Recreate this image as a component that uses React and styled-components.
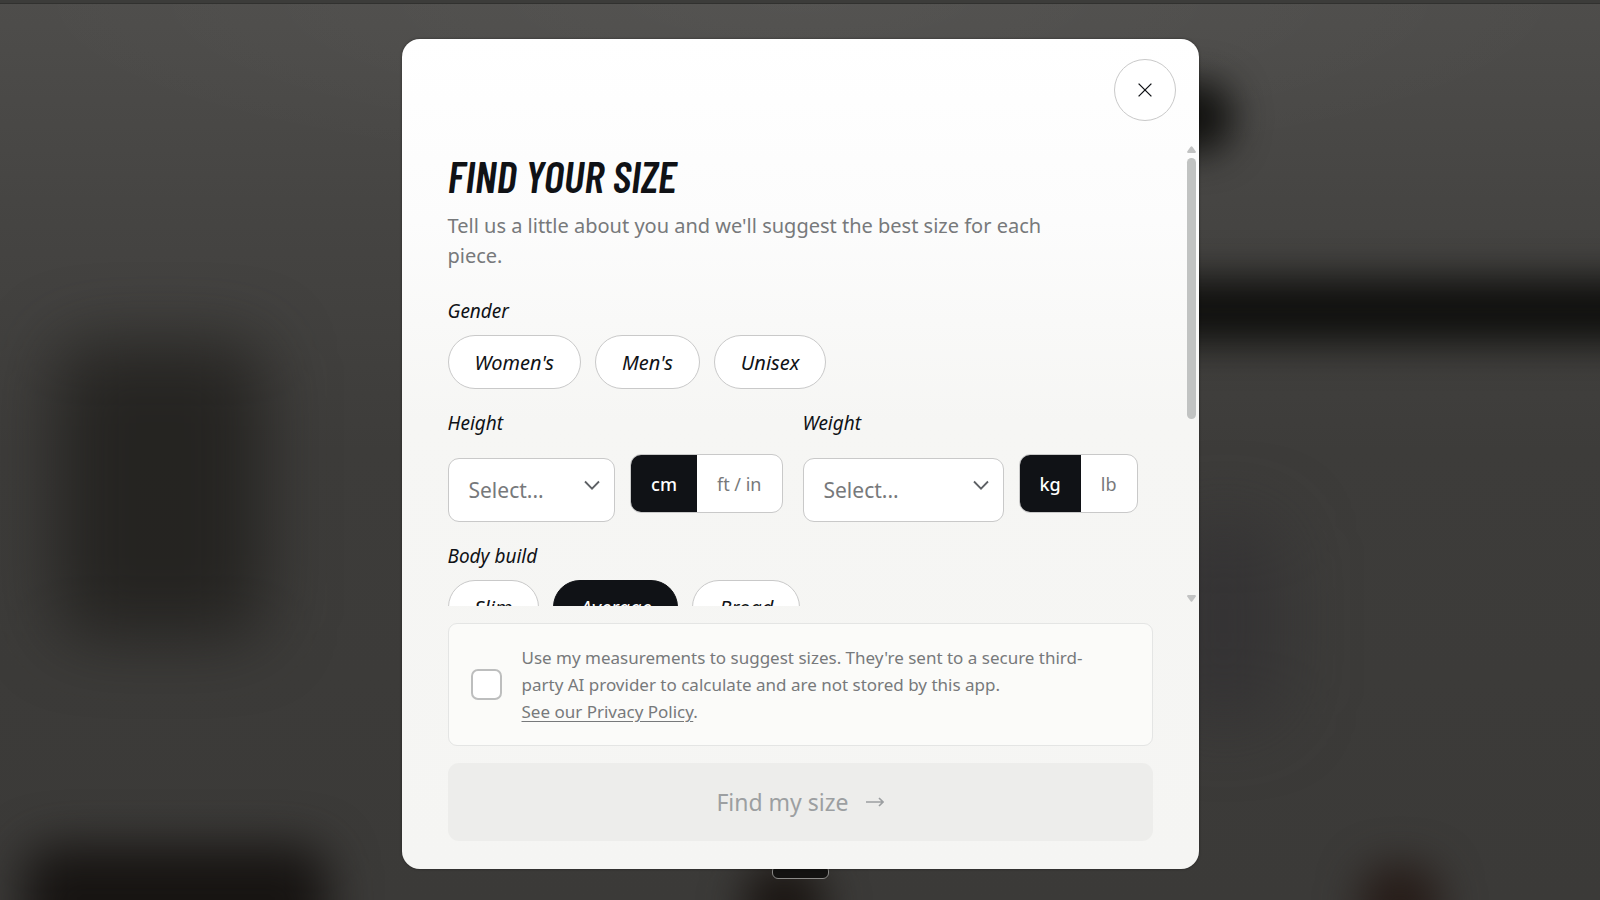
import React, { useState } from "react";
import styled, { createGlobalStyle, css } from "styled-components";

const ink = "#101216";
const muted = "#77797b";
const line = "#c9c9c9";

const GlobalStyle = createGlobalStyle`
  *, *::before, *::after { box-sizing: border-box; }
  body {
    margin: 0;
    background: #41403e;
    font-family: "Segoe UI", "Noto Sans", "Open Sans", sans-serif;
    color: ${ink};
  }
  button, input, select { font: inherit; color: inherit; }
`;

const Backdrop = styled.div`
  position: relative;
  display: flex;
  flex-direction: column;
  align-items: center;
  min-height: 100vh;
  padding-top: 39px;
  overflow: hidden;
  background:
    linear-gradient(#3c3c3a, #3c3c3a) 0 0 / 100% 3px no-repeat,
    linear-gradient(#31312f, #31312f) 0 3px / 100% 1px no-repeat,
    radial-gradient(ellipse 50% 20% at 50% 0, rgba(255, 255, 255, 0.04), transparent),
    linear-gradient(#4e4d4b, #454442 25%, #3d3c3a 50%, #3b3a38);
`;

const Shade = styled.div`
  position: absolute;
  left: ${(p) => p.$x}%;
  top: ${(p) => p.$y}%;
  width: ${(p) => p.$w}%;
  height: ${(p) => p.$h}%;
  border-radius: 30px;
  background: ${(p) => p.$color};
  filter: blur(${(p) => p.$blur}px);
`;

const Dialog = styled.form`
  width: 50vw;
  min-width: 600px;
  max-width: 797px;
  display: flex;
  flex-direction: column;
  border-radius: 18px;
  background: linear-gradient(#ffffff, #fcfcfc 22%, #f6f6f4 46%, #f5f5f3);
  box-shadow: 0 0 3px rgba(0, 0, 0, 0.4);
  z-index: 2;
`;

const TopBar = styled.div`
  display: flex;
  justify-content: flex-end;
  padding: 20px 23px;
`;

const CloseButton = styled.button`
  display: grid;
  place-items: center;
  width: 62px;
  height: 62px;
  padding: 0;
  border: 1px solid ${line};
  border-radius: 50%;
  background: #fff;
`;

const ScrollFrame = styled.div`
  display: flex;
  height: 465px;
`;

const ScrollArea = styled.div`
  flex: 1;
  padding: 8px 46px 0;
  overflow: hidden auto;
  scrollbar-width: none;
`;

const Rail = styled.div`
  display: flex;
  flex-direction: column;
  align-items: center;
  gap: 5px;
  width: 15px;
  padding: 5px 0 4px;
  color: #c2c3c3;
`;

const Thumb = styled.div`
  width: 9px;
  height: 261px;
  margin-bottom: auto;
  border-radius: 5px;
  background: #c1c3c2;
`;

const Title = styled.h1`
  margin: 0;
  font: italic 600 44px/54px "Barlow Condensed", "Roboto Condensed", "Liberation Sans Narrow", sans-serif;
  text-transform: uppercase;
`;

const Lead = styled.p`
  margin: 8px 0 26px;
  max-width: 620px;
  font-size: 20px;
  line-height: 30px;
  color: ${muted};
`;

const Group = styled.fieldset`
  min-width: 0;
  margin: 0 0 20px;
  padding: 0;
  border: 0;
`;

const labelText = css`
  display: block;
  padding: 0;
  font-size: 19px;
  font-style: italic;
  line-height: 28px;
`;

const Legend = styled.legend`
  ${labelText}
  margin-bottom: 10px;
`;

const Label = styled.label`
  ${labelText}
`;

const Pills = styled.div`
  display: flex;
  gap: 14px;
`;

const Pill = styled.button`
  height: 54px;
  padding: 0 26px;
  border: 1px solid ${(p) => (p.$active ? ink : line)};
  border-radius: 27px;
  background: ${(p) => (p.$active ? ink : "#fff")};
  color: ${(p) => (p.$active ? "#fff" : ink)};
  font-size: 20px;
  font-style: italic;
`;

const Measures = styled.div`
  display: grid;
  grid-template-columns: 1fr 1fr;
  gap: 20px;
  margin-bottom: 20px;
`;

const MeasureRow = styled.div`
  display: flex;
  align-items: flex-start;
  gap: 15px;
  margin-top: 17px;
`;

const SelectBox = styled.div`
  position: relative;
  flex: 1;
  margin-top: 4px;
`;

const Select = styled.select`
  appearance: none;
  width: 100%;
  height: 64px;
  padding: 0 20px;
  border: 1px solid ${line};
  border-radius: 11px;
  background: #fff;
  color: ${muted};
  font-size: 21px;
`;

const Chevron = styled.svg`
  position: absolute;
  top: 22px;
  right: 15px;
  pointer-events: none;
`;

const Units = styled.div`
  display: flex;
  height: 59px;
  border: 1px solid ${line};
  border-radius: 11px;
  overflow: hidden;
  background: #fff;
`;

const Unit = styled.button`
  padding: 0 20px;
  border: 0;
  background: ${(p) => (p.$active ? ink : "transparent")};
  color: ${(p) => (p.$active ? "#fff" : muted)};
  font-size: 18px;
  font-weight: ${(p) => (p.$active ? 500 : 400)};
`;

const Footer = styled.div`
  display: flex;
  flex-direction: column;
  gap: 17px;
  padding: 17px 46px 28px;
`;

const Consent = styled.div`
  display: flex;
  align-items: center;
  gap: 20px;
  padding: 20px 22px;
  border: 1px solid #e4e5e4;
  border-radius: 9px;
  background: #fbfbf9;
`;

const Check = styled.input`
  appearance: none;
  flex: none;
  width: 31px;
  height: 31px;
  margin: 0;
  border: 2px solid #bdbebe;
  border-radius: 7px;
  background: #fff;
  &:checked { background: ${ink}; }
`;

const ConsentText = styled.div`
  max-width: 580px;
  font-size: 17px;
  line-height: 27px;
  color: ${muted};
`;

const PolicyLink = styled.a`
  color: inherit;
  text-underline-offset: 3px;
`;

const Submit = styled.button`
  display: flex;
  align-items: center;
  justify-content: center;
  gap: 17px;
  height: 78px;
  border: 0;
  border-radius: 11px;
  background: #ededeb;
  color: #9c9fa1;
  font-size: 23px;
`;

const Handle = styled.div`
  z-index: 1;
  width: 57px;
  height: 14px;
  margin-top: -4px;
  border: 1px solid #8b8a88;
  border-radius: 6px;
  background: #131211;
`;

const shades = [
  { $x: 3.5, $y: 38, $w: 13, $h: 33, $blur: 34, $color: "rgba(30, 28, 26, 0.75)" },
  { $x: 1.5, $y: 94, $w: 19, $h: 16, $blur: 24, $color: "#171412" },
  { $x: 71, $y: 31, $w: 35, $h: 7, $blur: 20, $color: "#0e0e0c" },
  { $x: 71, $y: 9, $w: 6, $h: 8, $blur: 18, $color: "rgba(12, 12, 10, 0.9)" },
  { $x: 73, $y: 58, $w: 7, $h: 22, $blur: 36, $color: "rgba(46, 45, 48, 0.6)" },
  { $x: 85, $y: 96, $w: 5, $h: 12, $blur: 20, $color: "#271d19" },
  { $x: 46.5, $y: 96, $w: 5, $h: 12, $blur: 20, $color: "#1c1714" },
];

function PillGroup({ legend, options, initial }) {
  const [value, setValue] = useState(initial);
  return (
    <Group>
      <Legend>{legend}</Legend>
      <Pills>
        {options.map((o) => (
          <Pill key={o} type="button" $active={o === value} aria-pressed={o === value} onClick={() => setValue(o)}>
            {o}
          </Pill>
        ))}
      </Pills>
    </Group>
  );
}

function Measure({ id, label, units }) {
  const [unit, setUnit] = useState(units[0]);
  return (
    <div>
      <Label htmlFor={id}>{label}</Label>
      <MeasureRow>
        <SelectBox>
          <Select id={id} defaultValue="">
            <option value="">Select...</option>
          </Select>
          <Chevron width="16" height="12" viewBox="0 0 16 12" fill="none" stroke="#5d6064" strokeWidth="1.8">
            <path d="M1 1.5 8 8.6l7-7.1" />
          </Chevron>
        </SelectBox>
        <Units>
          {units.map((u) => (
            <Unit key={u} type="button" $active={u === unit} aria-pressed={u === unit} onClick={() => setUnit(u)}>
              {u}
            </Unit>
          ))}
        </Units>
      </MeasureRow>
    </div>
  );
}

export default function App() {
  return (
    <Backdrop>
      <GlobalStyle />
      {shades.map((s, i) => (
        <Shade key={i} {...s} />
      ))}
      <Dialog role="dialog" aria-labelledby="title">
        <TopBar>
          <CloseButton type="button" aria-label="Close">
            <svg width="14" height="14" viewBox="0 0 14 14" fill="none" stroke={ink} strokeWidth="1.3">
              <path d="M.6.6l12.8 12.8M13.4.6.6 13.4" />
            </svg>
          </CloseButton>
        </TopBar>
        <ScrollFrame>
          <ScrollArea>
            <Title id="title">Find your size</Title>
            <Lead>Tell us a little about you and we'll suggest the best size for each piece.</Lead>
            <PillGroup legend="Gender" options={["Women's", "Men's", "Unisex"]} />
            <Measures>
              <Measure id="height" label="Height" units={["cm", "ft / in"]} />
              <Measure id="weight" label="Weight" units={["kg", "lb"]} />
            </Measures>
            <PillGroup legend="Body build" options={["Slim", "Average", "Broad"]} initial="Average" />
          </ScrollArea>
          <Rail aria-hidden="true">
            <svg width="9" height="7" viewBox="0 0 9 7" fill="currentColor"><path d="M3.6.7Q4.5-.4 5.4.7L8.8 5.6Q9 7 8 7H1Q0 7 .2 5.6Z" /></svg>
            <Thumb />
            <svg width="9" height="7" viewBox="0 0 9 7" fill="currentColor"><path d="M3.6 6.3Q4.5 7.4 5.4 6.3L8.8 1.4Q9 0 8 0H1Q0 0 .2 1.4Z" /></svg>
          </Rail>
        </ScrollFrame>
        <Footer>
          <Consent>
            <Check type="checkbox" id="consent" />
            <ConsentText>
              <label htmlFor="consent">
                Use my measurements to suggest sizes. They're sent to a secure third-party AI provider to calculate and are not stored by this app.
              </label>
              <br />
              <PolicyLink href="#privacy">See our Privacy Policy</PolicyLink>.
            </ConsentText>
          </Consent>
          <Submit type="submit" disabled>
            Find my size
            <svg width="18" height="10" viewBox="0 0 18 10" fill="none" stroke="currentColor" strokeWidth="1.6">
              <path d="M0 5h17M13 1l4 4-4 4" />
            </svg>
          </Submit>
        </Footer>
      </Dialog>
      <Handle />
    </Backdrop>
  );
}
